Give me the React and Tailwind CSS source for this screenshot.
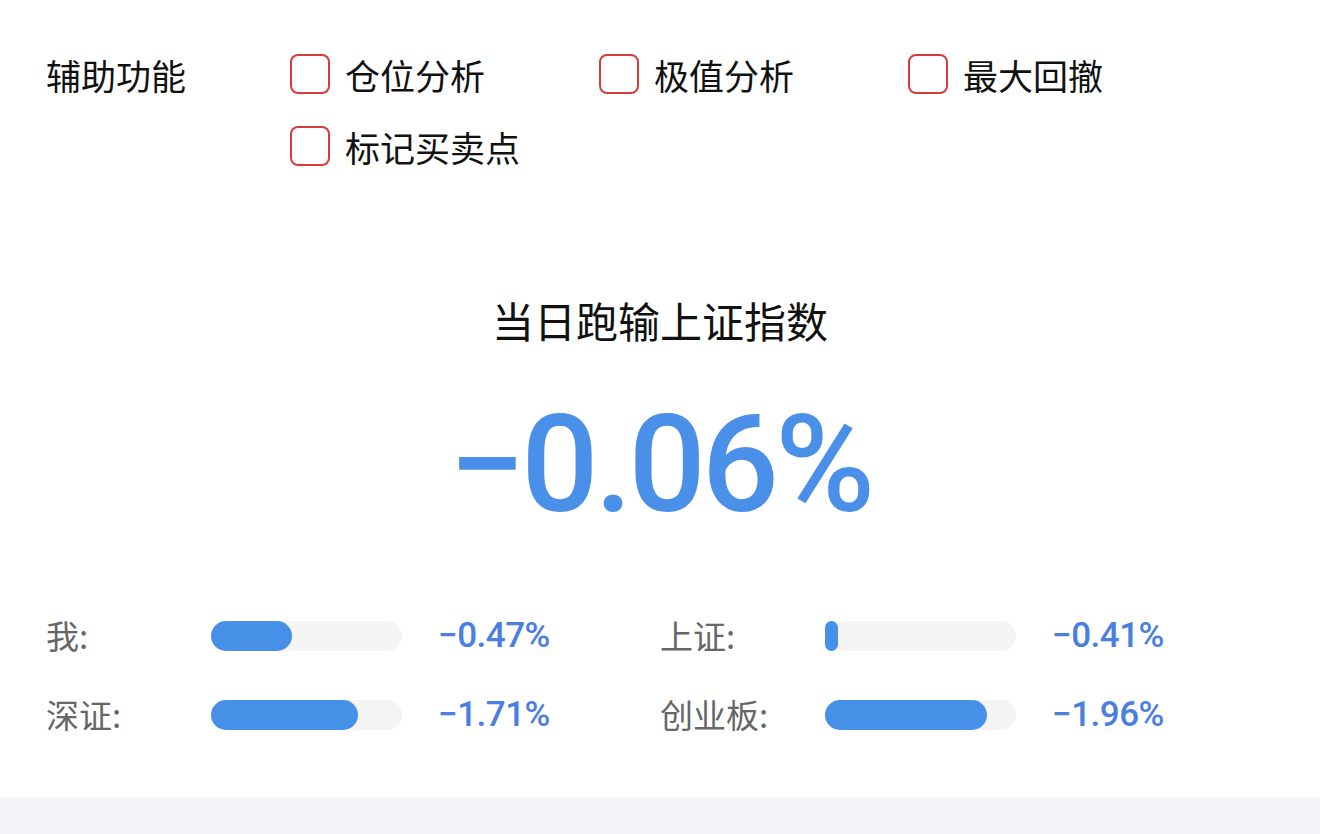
import React from 'react';

const CN = { fontFamily: '"Noto Sans CJK SC", "Noto Sans", sans-serif' };
const NUM = { fontFamily: '"Roboto", "Noto Sans CJK SC", sans-serif' };

const options = ['仓位分析', '极值分析', '最大回撤', '标记买卖点'];

const rows = [
  [
    { label: '我:', pct: 81, value: '−0.47%' },
    { label: '上证:', pct: 13, value: '−0.41%' },
  ],
  [
    { label: '深证:', pct: 147, value: '−1.71%' },
    { label: '创业板:', pct: 162, value: '−1.96%' },
  ],
];

function Checkbox({ label }) {
  return (
    <label className="flex items-center h-[72px] cursor-pointer">
      <span className="w-10 h-10 rounded-lg border-2 border-[#d63c3c] bg-white shrink-0" />
      <span className="ml-[15px] text-[35px] text-[#111] leading-none">{label}</span>
    </label>
  );
}

function Stat({ label, pct, value }) {
  return (
    <div className="flex items-center w-[614px]">
      <span className="w-[165px] text-[33px] text-[#666] leading-none">{label}</span>
      <div className="w-[191px] h-[30px] rounded-full bg-[#f4f4f5]">
        <div className="h-full rounded-full bg-[#4690e8]" style={{ width: pct }} />
      </div>
      <span className="ml-[36px] text-[35px] font-medium text-[#4a7ee0] leading-none tracking-[-0.5px]" style={NUM}>{value}</span>
    </div>
  );
}

export default function App() {
  return (
    <div className="w-[1320px] h-[834px] bg-white flex flex-col" style={CN}>
      <div className="flex-1 pl-[46px]">
        {/* 辅助功能 */}
        <div className="flex pt-[38px]">
          <div className="w-[244px] h-[72px] flex items-center text-[35px] text-[#111] leading-none">辅助功能</div>
          <div className="grid grid-cols-[309px_309px_309px]">
            {options.map(o => <Checkbox key={o} label={o} />)}
          </div>
        </div>

        {/* 跑输 */}
        <div className="w-[1228px] flex flex-col items-center mt-[117px]">
          <div className="text-[42px] text-[#111] leading-none">当日跑输上证指数</div>
          <div className="mt-[56px] text-[136px] font-medium text-[#4a90e8] leading-none tracking-[-4px]" style={NUM}>−0.06%</div>
        </div>

        {/* 对比 */}
        <div className="mt-[85px] flex flex-col gap-[44px]">
          {rows.map((r, i) => (
            <div key={i} className="flex">
              {r.map(s => <Stat key={s.label} {...s} />)}
            </div>
          ))}
        </div>
      </div>
      <div className="h-[36px] bg-[#f2f3f7]" />
    </div>
  );
}
